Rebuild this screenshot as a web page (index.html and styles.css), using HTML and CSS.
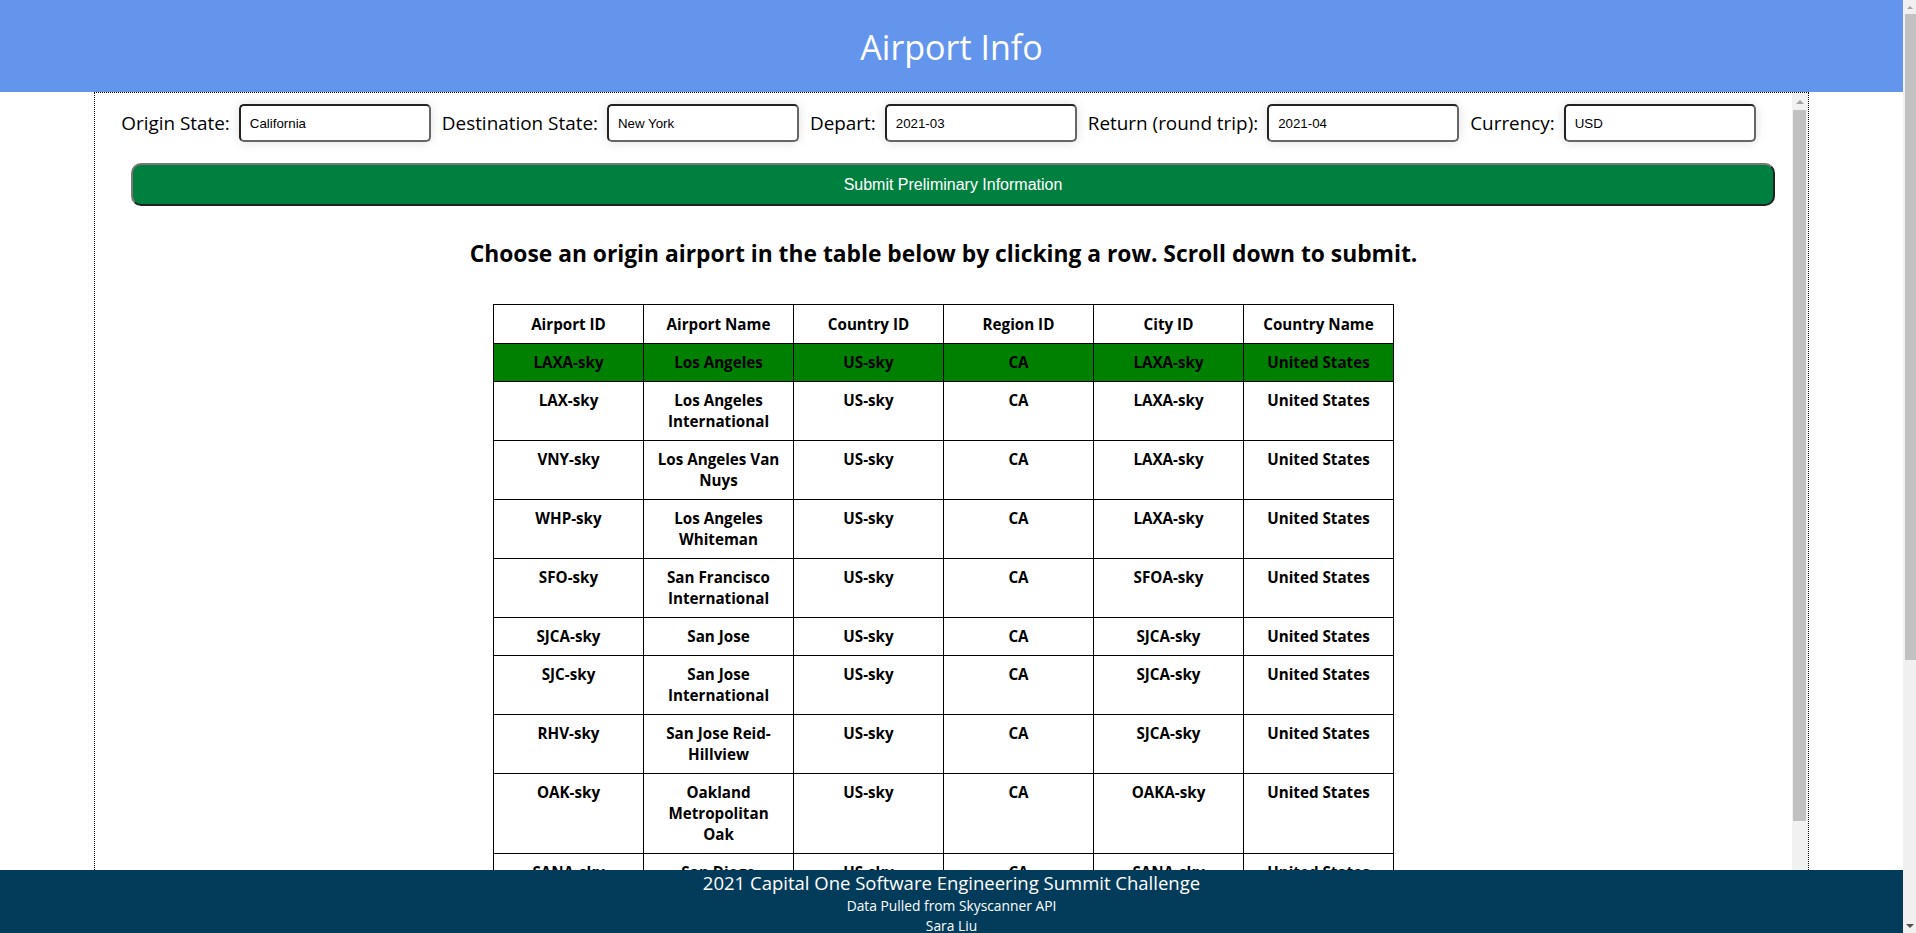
FILE: index.html
```html
<!DOCTYPE html>
<html lang="en">
<head>
<meta charset="utf-8">
<title>Airport Info</title>
<link rel="stylesheet" href="styles.css">
</head>
<body>
<header class="top">
  <h1 class="title">Airport Info</h1>
</header>
<main class="panel">
  <div class="panel-body">
    <form class="prelim">
      <div class="field"><label class="lbl">Origin State:</label><input class="inp" type="text" value="California"></div>
      <div class="field"><label class="lbl">Destination State:</label><input class="inp" type="text" value="New York"></div>
      <div class="field"><label class="lbl">Depart:</label><input class="inp" type="text" value="2021-03"></div>
      <div class="field"><label class="lbl">Return (round trip):</label><input class="inp" type="text" value="2021-04"></div>
      <div class="field"><label class="lbl">Currency:</label><input class="inp" type="text" value="USD"></div>
    </form>
    <button class="submit" type="button">Submit Preliminary Information</button>
    <h2 class="prompt">Choose an origin airport in the table below by clicking a row. Scroll down to submit.</h2>
    <table class="airports">
      <thead>
        <tr><th>Airport ID</th><th>Airport Name</th><th>Country ID</th><th>Region ID</th><th>City ID</th><th>Country Name</th></tr>
      </thead>
      <tbody>
        <tr class="selected"><td>LAXA-sky</td><td>Los Angeles</td><td>US-sky</td><td>CA</td><td>LAXA-sky</td><td>United States</td></tr>
        <tr><td>LAX-sky</td><td>Los Angeles International</td><td>US-sky</td><td>CA</td><td>LAXA-sky</td><td>United States</td></tr>
        <tr><td>VNY-sky</td><td>Los Angeles Van Nuys</td><td>US-sky</td><td>CA</td><td>LAXA-sky</td><td>United States</td></tr>
        <tr><td>WHP-sky</td><td>Los Angeles Whiteman</td><td>US-sky</td><td>CA</td><td>LAXA-sky</td><td>United States</td></tr>
        <tr><td>SFO-sky</td><td>San Francisco International</td><td>US-sky</td><td>CA</td><td>SFOA-sky</td><td>United States</td></tr>
        <tr><td>SJCA-sky</td><td>San Jose</td><td>US-sky</td><td>CA</td><td>SJCA-sky</td><td>United States</td></tr>
        <tr><td>SJC-sky</td><td>San Jose International</td><td>US-sky</td><td>CA</td><td>SJCA-sky</td><td>United States</td></tr>
        <tr><td>RHV-sky</td><td>San Jose Reid-Hillview</td><td>US-sky</td><td>CA</td><td>SJCA-sky</td><td>United States</td></tr>
        <tr><td>OAK-sky</td><td>Oakland Metropolitan Oak</td><td>US-sky</td><td>CA</td><td>OAKA-sky</td><td>United States</td></tr>
        <tr><td>SANA-sky</td><td>San Diego</td><td>US-sky</td><td>CA</td><td>SANA-sky</td><td>United States</td></tr>
        <tr><td>SAN-sky</td><td>San Diego</td><td>US-sky</td><td>CA</td><td>SANA-sky</td><td>United States</td></tr>
      </tbody>
    </table>
  </div>
  <div class="vscroll" aria-hidden="true">
    <div class="arrow-btn"><span class="tri-up"></span></div>
    <div class="vthumb"></div>
  </div>
</main>
<footer class="foot">
  <div class="foot-title">2021 Capital One Software Engineering Summit Challenge</div>
  <div class="foot-line">Data Pulled from Skyscanner API</div>
  <div class="foot-line">Sara Liu</div>
</footer>
<div class="page-scroll" aria-hidden="true">
  <div class="page-arrow"><span class="tri-up small"></span></div>
  <div class="page-thumb"></div>
  <div class="page-spacer"></div>
  <div class="page-arrow"><span class="tri-down"></span></div>
</div>
</body>
</html>
```

FILE: styles.css
```css
html, body {
  margin: 0;
  padding: 0;
}
body {
  font-family: "Open Sans", "Noto Sans", sans-serif;
  color: #000;
  background: #fff;
  margin-right: 13px;
  height: 933px;
  overflow: hidden;
}
.top {
  height: 92px;
  background: #6495ed;
  display: flex;
  align-items: center;
  justify-content: center;
}
.title {
  margin: 0;
  color: #fff;
  font-weight: 400;
  font-size: 34px;
  line-height: 1;
  padding-top: 2px;
}
.panel {
  width: 90%;
  margin: 0 auto;
  height: 850px;
  border: 1px dotted #000;
  display: flex;
  overflow: hidden;
}
.panel-body {
  flex: 1;
  min-width: 0;
}
.vscroll {
  width: 16px;
  flex: none;
  background: #f1f1f1;
  display: flex;
  flex-direction: column;
  align-items: center;
}
.arrow-btn {
  height: 17px;
  width: 100%;
  display: flex;
  align-items: center;
  justify-content: center;
}
.tri-up {
  width: 0;
  height: 0;
  border-left: 4px solid transparent;
  border-right: 4px solid transparent;
  border-bottom: 4px solid #a3a3a3;
}
.vthumb {
  width: 13px;
  height: 711px;
  background: #c1c1c1;
}
.prelim {
  display: flex;
  justify-content: center;
  align-items: center;
  gap: 11px;
  padding-top: 11px;
  margin: 0;
  padding-right: 10px;
}
.field {
  display: flex;
  align-items: center;
  gap: 9px;
}
.lbl {
  font-size: 18.9px;
  line-height: 24px;
}
.inp {
  box-sizing: border-box;
  width: 192px;
  height: 38px;
  border: 2px solid;
  border-color: #222 #666 #666 #222;
  border-radius: 5px;
  padding: 0 9px;
  font-family: "Liberation Sans", Arial, sans-serif;
  font-size: 13.3px;
  color: #000;
  box-shadow: 0 0 12px rgba(0, 0, 0, 0.12);
}
.submit {
  display: block;
  box-sizing: border-box;
  width: calc(100% - 53px);
  height: 43px;
  margin: 21px 17px 0 36px;
  background: #00803f;
  color: #fff;
  border: 2px solid;
  border-color: #777 #222 #222 #777;
  border-radius: 10px;
  font-family: "Liberation Sans", Arial, sans-serif;
  font-size: 16px;
}
.prompt {
  margin: 31px 0 0;
  text-align: center;
  font-size: 22.8px;
  font-weight: 700;
  line-height: 34px;
}
.airports {
  margin: 33px auto 40px;
  width: 901px;
  table-layout: fixed;
  border-collapse: collapse;
  font-size: 15.2px;
  font-weight: 700;
}
.airports th,
.airports td {
  border: 1px solid #000;
  padding: 8px 8px;
  line-height: 21px;
  text-align: center;
  vertical-align: top;
}
.airports th {
  padding-top: 9px;
}
.airports tr.selected td {
  background: #008000;
}
.foot {
  position: fixed;
  left: 0;
  right: 13px;
  bottom: 0;
  height: 63px;
  overflow: hidden;
  background: #033c5a;
  color: #fff;
  text-align: center;
}
.foot-title {
  font-size: 18.5px;
  line-height: 26px;
}
.foot-line {
  font-size: 13.8px;
  line-height: 20px;
}
.page-scroll {
  position: fixed;
  top: 0;
  right: 0;
  bottom: 0;
  width: 13px;
  background: #f0f0f0;
  display: flex;
  flex-direction: column;
  align-items: flex-end;
}
.page-arrow {
  width: 13px;
  height: 14px;
  display: flex;
  align-items: center;
  justify-content: center;
}
.tri-up.small {
  border-left-width: 3px;
  border-right-width: 3px;
  border-bottom-width: 3px;
}
.tri-down {
  width: 0;
  height: 0;
  border-left: 4px solid transparent;
  border-right: 4px solid transparent;
  border-top: 4px solid #505050;
}
.page-thumb {
  width: 11px;
  height: 646px;
  background: #c1c1c1;
}
.page-spacer {
  flex: 1;
}
```
